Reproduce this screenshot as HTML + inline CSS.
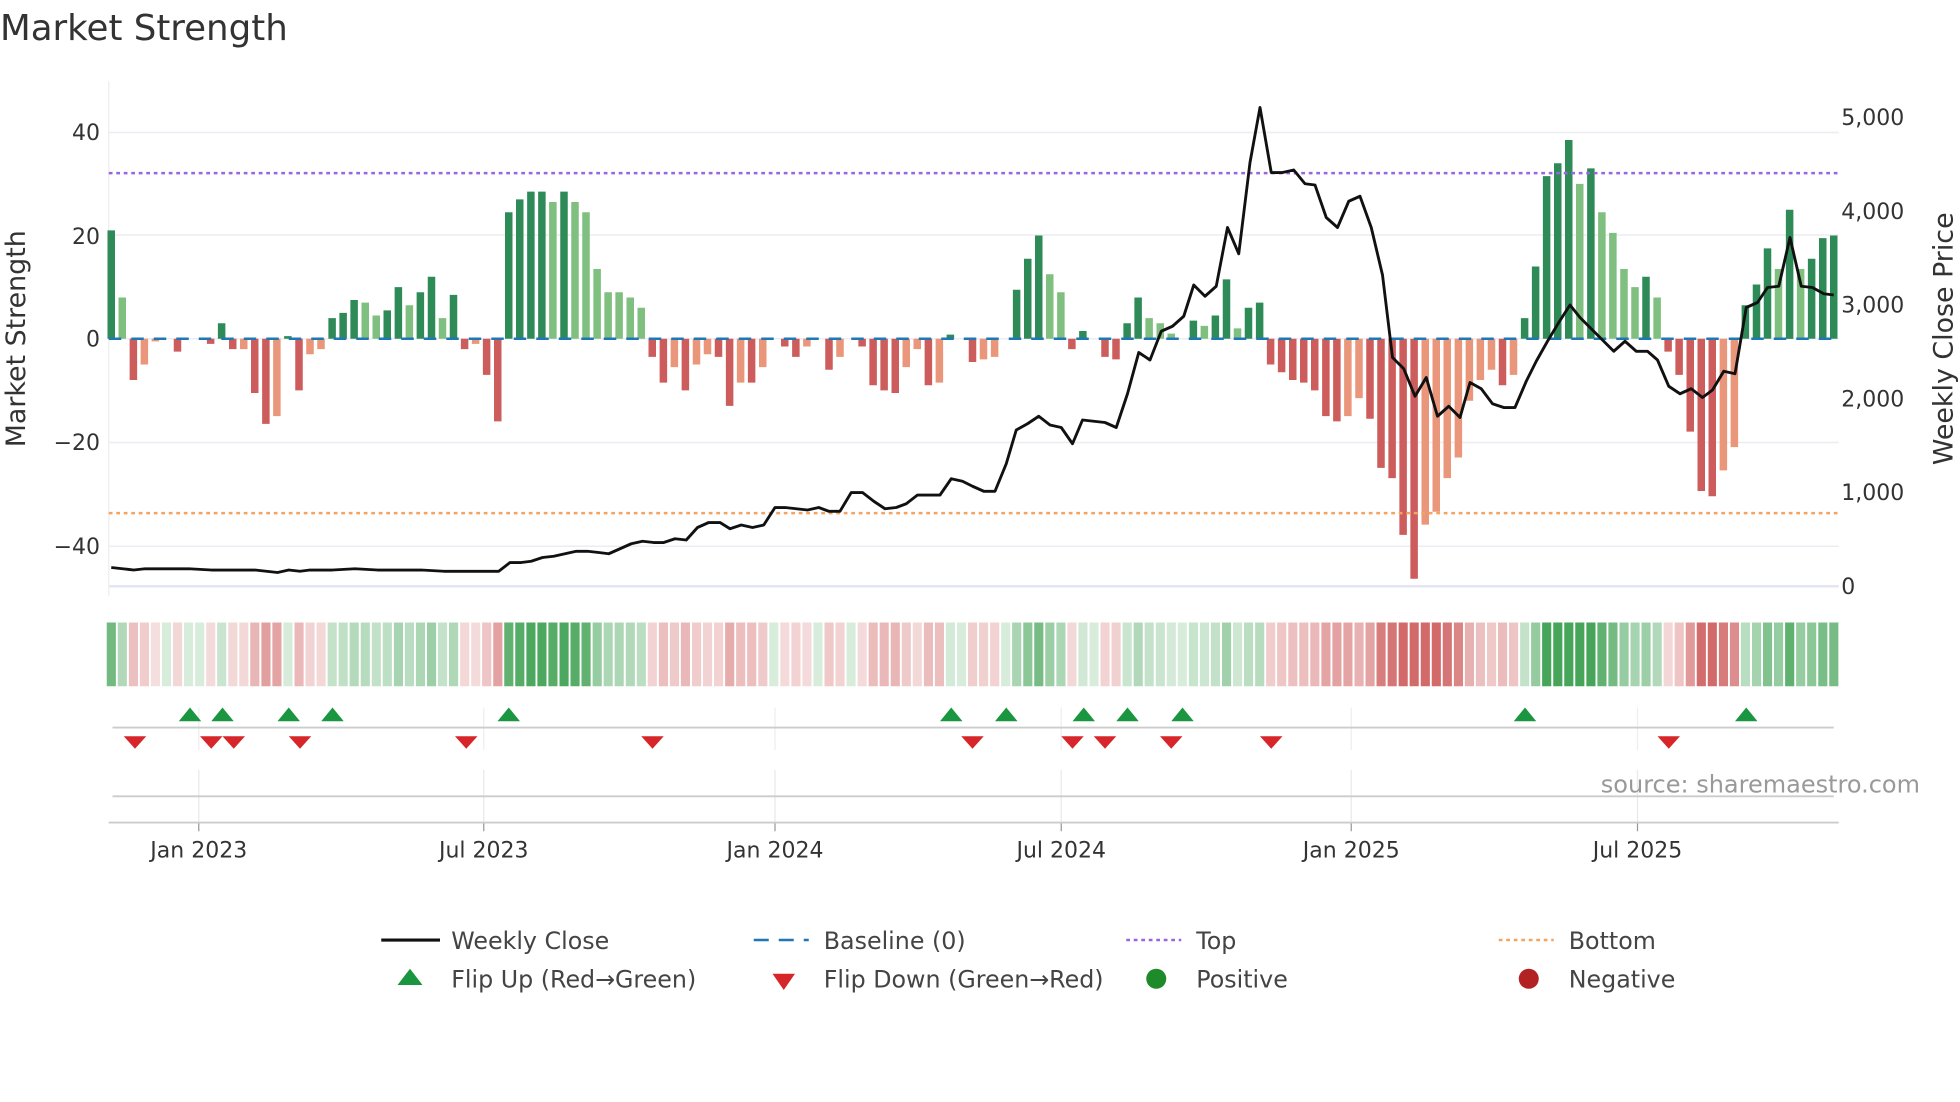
<!DOCTYPE html>
<html><head><meta charset="utf-8"><style>
html,body{margin:0;padding:0;background:#fff;width:1960px;height:1102px;overflow:hidden}
svg{display:block;font-family:"DejaVu Sans","Liberation Sans",sans-serif}
</style></head><body>
<svg id="s" width="1960" height="1102" viewBox="0 0 1568 881.6" xmlns="http://www.w3.org/2000/svg">
<text x="0" y="32" font-size="28.5" fill="#333">Market Strength</text>
<g id="g"></g>
<text x="1536" y="634" font-size="19.2" fill="#999" text-anchor="end">source: sharemaestro.com</text>
<text transform="translate(20,271) rotate(-90)" font-size="21.5" fill="#333" text-anchor="middle">Market Strength</text>
<text transform="translate(1562,271) rotate(-90)" font-size="21.5" fill="#333" text-anchor="middle">Weekly Close Price</text>
<g font-size="17.6" fill="#333" text-anchor="end">
<text x="80" y="112">40</text><text x="80" y="195">20</text><text x="80" y="277">0</text><text x="80" y="360">−20</text><text x="80" y="443">−40</text>
</g>
<g font-size="17.6" fill="#333">
<text x="1473" y="100">5,000</text><text x="1473" y="175">4,000</text><text x="1473" y="250">3,000</text><text x="1473" y="325">2,000</text><text x="1473" y="400">1,000</text><text x="1473" y="475">0</text>
</g>
<g font-size="17.6" fill="#333" text-anchor="middle">
<text x="159" y="686">Jan 2023</text><text x="387" y="686">Jul 2023</text><text x="620" y="686">Jan 2024</text><text x="849" y="686">Jul 2024</text><text x="1081" y="686">Jan 2025</text><text x="1310" y="686">Jul 2025</text>
</g>
<g font-size="19" fill="#444">
<line x1="305" y1="752" x2="352" y2="752" stroke="#111" stroke-width="2.5"/><text x="361" y="759">Weekly Close</text>
<line x1="603" y1="752" x2="647" y2="752" stroke="#1f77b4" stroke-width="2" stroke-dasharray="12,8"/><text x="659" y="759">Baseline (0)</text>
<line x1="901" y1="752" x2="945" y2="752" stroke="#9966dd" stroke-width="2" stroke-dasharray="3,3"/><text x="957" y="759">Top</text>
<line x1="1199" y1="752" x2="1243" y2="752" stroke="#f4a460" stroke-width="2" stroke-dasharray="3,3"/><text x="1255" y="759">Bottom</text>
<polygon points="328,775 338,788 318,788" fill="#1a9641"/><text x="361" y="790">Flip Up (Red→Green)</text>
<polygon points="618,779 636,779 627,792" fill="#d7262a"/><text x="659" y="790">Flip Down (Green→Red)</text>
<circle cx="925" cy="783" r="8" fill="#1e8a2a"/><text x="957" y="790">Positive</text>
<circle cx="1223" cy="783" r="8" fill="#b22222"/><text x="1255" y="790">Negative</text>
</g>
</svg>
<script>
const D="21d 8l -8r -5s -0.5s 0r -2.5r 0r 0r -1r 3d -2r -2s -10.5r -16.5r -15s 0.5d -10r -3s -2s 4d 5d 7.5d 7l 4.5l 5.5d 10d 6.5l 9d 12d 4l 8.5d -2r -1s -7r -16r 24.5d 27d 28.5d 28.5d 26.5l 28.5d 26.5l 24.5l 13.5l 9l 9l 8l 6l -3.5r -8.5r -5.5s -10r -5s -3s -3.5r -13r -8.5s -8.5r -5.5s 0r -1.5r -3.5r -1.5s 0r -6r -3.5s 0r -1.5r -9r -10r -10.5r -5.5s -2s -9r -8.5s 0.8d 0r -4.5r -4s -3.5s 0r 9.5d 15.5d 20d 12.5l 9l -2r 1.5d 0r -3.5r -4r 3d 8d 4l 3l 1l 0r 3.5d 2.5l 4.5d 11.5d 2l 6d 7d -5r -6.5r -8r -8.5r -10r -15r -16r -15s -11.5s -15.5r -25r -27r -38r -46.5r -36s -33.5s -27s -23s -12s -8s -6s -9r -7s 4d 14d 31.5d 34d 38.5d 30l 33d 24.5l 20.5l 13.5l 10l 12d 8l -2.5r -7r -18r -29.5r -30.5r -25.5s -21s 6.5d 10.5d 17.5d 13.5l 25d 13.5l 15.5d 19.5d 20d".split(" ");
const P=[[89,454],[98,455],[107,456],[116,455],[133,455],[151,455],[169,456],[187,456],[204,456],[213,457],[222,458],[231,456],[240,457],[248,456],[266,456],[284,455],[302,456],[337,456],[355,457],[399,457],[408,450],[417,450],[425,449],[434,446],[443,445],[452,443],[461,441],[470,441],[479,442],[487,443],[496,439],[505,435],[514,433],[523,434],[531,434],[540,431],[549,432],[558,422],[567,418],[576,418],[584,423],[593,420],[602,422],[611,420],[620,406],[628,406],[637,407],[646,408],[655,406],[663,409],[672,409],[681,394],[690,394],[699,401],[708,407],[717,406],[725,403],[734,396],[743,396],[752,396],[761,383],[770,385],[778,389],[787,393],[796,393],[805,371],[813,344],[822,339],[831,333],[840,340],[849,342],[858,355],[866,336],[875,337],[884,338],[893,342],[902,315],[911,282],[920,288],[929,265],[938,261],[947,253],[955,228],[964,237],[973,229],[982,182],[991,203],[1000,130],[1008,86],[1017,138],[1026,138],[1035,136],[1044,147],[1052,148],[1061,174],[1070,182],[1079,161],[1088,157],[1097,182],[1106,220],[1114,286],[1123,295],[1132,317],[1141,302],[1150,333],[1159,325],[1168,334],[1176,306],[1185,311],[1194,323],[1203,326],[1212,326],[1221,305],[1229,289],[1238,273],[1247,258],[1256,244],[1264,254],[1273,263],[1282,272],[1291,281],[1300,273],[1309,281],[1318,281],[1326,288],[1335,309],[1344,315],[1353,311],[1362,318],[1370,312],[1379,297],[1388,299],[1397,246],[1406,242],[1414,230],[1423,229],[1432,190],[1441,229],[1450,230],[1459,235],[1467,236]];
const UP=[152,178,231,266,407,761,805,867,902,946,1220,1397],DN=[108,169,187,240,373,522,778,858,884,937,1017,1335];
const C={d:"#2e8b57",l:"#7fbf7f",r:"#cd5c5c",s:"#e9967a"};
let h="";
[106,188,271,354,437].forEach(y=>h+=`<line x1="87" x2="1471" y1="${y}" y2="${y}" stroke="#ececf2" stroke-width="1.2"/>`);
h+=`<line x1="87" x2="1471" y1="469" y2="469" stroke="#e3e6f0" stroke-width="2"/>`;
h+=`<line x1="87" x2="87" y1="65" y2="477" stroke="#eee" stroke-width="1"/>`;
[159,387,620,849,1081,1310].forEach(x=>{h+=`<line x1="${x}" x2="${x}" y1="566" y2="600" stroke="#eee"/><line x1="${x}" x2="${x}" y1="616" y2="658" stroke="#e8e8ee"/><line x1="${x}" x2="${x}" y1="658" y2="665" stroke="#999"/>`;});
h+=`<line x1="90" x2="1467" y1="582" y2="582" stroke="#ccc" stroke-width="1.5"/><line x1="90" x2="1467" y1="637" y2="637" stroke="#ccc" stroke-width="1.5"/><line x1="87" x2="1471" y1="658" y2="658" stroke="#ccc" stroke-width="1.5"/>`;
const n=D.length,step=(1467-89)/(n-1);
D.forEach((s,i)=>{const v=parseFloat(s),c=s.slice(-1),x=89+i*step;
 const y0=271,y1=271-v*4.13;
 if(Math.abs(v)>0.05)h+=`<rect x="${(x-3).toFixed(1)}" y="${Math.min(y0,y1).toFixed(1)}" width="6" height="${Math.abs(y1-y0).toFixed(1)}" fill="${C[c]}"/>`;
 const a=Math.min(0.95,0.2+Math.abs(v)/40);
 const col=v>=0?`rgba(60,160,80,${a})`:`rgba(200,70,70,${a*0.85})`;
 h+=`<rect x="${(x-3.6).toFixed(1)}" y="498" width="7.3" height="51" fill="${col}"/>`;
});
h+=`<line x1="87" x2="1471" y1="271" y2="271" stroke="#1f77b4" stroke-width="2" stroke-dasharray="10,8"/>`;
h+=`<line x1="87" x2="1471" y1="138.5" y2="138.5" stroke="#9966dd" stroke-width="2" stroke-dasharray="3,3"/>`;
h+=`<line x1="87" x2="1471" y1="410.5" y2="410.5" stroke="#f4a460" stroke-width="2" stroke-dasharray="3,3"/>`;
h+=`<polyline fill="none" stroke="#111" stroke-width="2.3" stroke-linejoin="round" points="${P.map(p=>p.join(",")).join(" ")}"/>`;
UP.forEach(x=>h+=`<polygon points="${x},566 ${x+9},577 ${x-9},577" fill="#1a9641"/>`);
DN.forEach(x=>h+=`<polygon points="${x-9},589 ${x+9},589 ${x},599" fill="#d7262a"/>`);
document.getElementById("g").innerHTML=h;
</script>
</body></html>
